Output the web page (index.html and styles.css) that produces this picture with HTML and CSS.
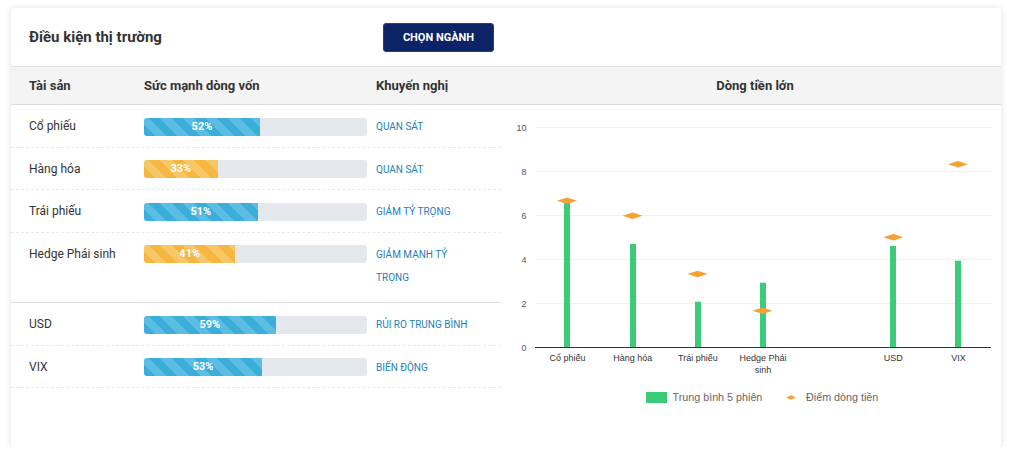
FILE: index.html
```html
<!DOCTYPE html>
<html lang="vi">
<head>
<meta charset="utf-8">
<title>Điều kiện thị trường</title>
<link rel="stylesheet" href="styles.css">
</head>
<body>
<div class="card">
  <div class="card-head">
    <h2 class="title">Điều kiện thị trường</h2>
    <button class="btn" type="button">CHỌN NGÀNH</button>
  </div>
  <div class="card-body">
    <section class="assets">
      <div class="row head">
        <div>Tài sản</div>
        <div>Sức mạnh dòng vốn</div>
        <div class="rec-h">Khuyến nghị</div>
      </div>
      <div class="row">
        <div class="name">Cổ phiếu</div>
        <div class="bar"><div class="fill blue" style="width:52%">52%</div></div>
        <div class="rec">QUAN SÁT</div>
      </div>
      <div class="row">
        <div class="name">Hàng hóa</div>
        <div class="bar"><div class="fill orange" style="width:33%">33%</div></div>
        <div class="rec">QUAN SÁT</div>
      </div>
      <div class="row">
        <div class="name">Trái phiếu</div>
        <div class="bar"><div class="fill blue" style="width:51%">51%</div></div>
        <div class="rec">GIẢM TỶ TRỌNG</div>
      </div>
      <div class="row group-end">
        <div class="name">Hedge Phái sinh</div>
        <div class="bar"><div class="fill orange" style="width:41%">41%</div></div>
        <div class="rec">GIẢM MẠNH TỶ TRỌNG</div>
      </div>
      <div class="row">
        <div class="name">USD</div>
        <div class="bar"><div class="fill blue" style="width:59%">59%</div></div>
        <div class="rec">RỦI RO TRUNG BÌNH</div>
      </div>
      <div class="row">
        <div class="name">VIX</div>
        <div class="bar"><div class="fill blue" style="width:53%">53%</div></div>
        <div class="rec">BIẾN ĐỘNG</div>
      </div>
    </section>
    <section class="flow">
      <div class="flow-head">Dòng tiền lớn</div>
      <svg class="chart" width="500" height="342" viewBox="0 0 500 342">
        <g class="grid">
          <line x1="34" y1="22.5" x2="490" y2="22.5"/>
          <line x1="34" y1="66.5" x2="490" y2="66.5"/>
          <line x1="34" y1="110.5" x2="490" y2="110.5"/>
          <line x1="34" y1="154.5" x2="490" y2="154.5"/>
          <line x1="34" y1="198.5" x2="490" y2="198.5"/>
        </g>
        <g class="ylab">
          <text x="25.5" y="26">10</text>
          <text x="25.5" y="70">8</text>
          <text x="25.5" y="114">6</text>
          <text x="25.5" y="158">4</text>
          <text x="25.5" y="202">2</text>
          <text x="25.5" y="246">0</text>
        </g>
        <g class="bars">
          <rect x="63" y="96.7" width="6" height="145.3"/>
          <rect x="129" y="139" width="6" height="103"/>
          <rect x="194" y="196.7" width="6" height="45.3"/>
          <rect x="259" y="177.7" width="6" height="64.3"/>
          <rect x="389" y="141" width="6" height="101"/>
          <rect x="454" y="155.7" width="6" height="86.3"/>
        </g>
        <line class="axis" x1="34" y1="242.5" x2="490" y2="242.5"/>
        <g class="marks">
          <polygon points="56,95.7 66,92.5 76,95.7 66,98.9"/>
          <polygon points="121.5,110.7 131.5,107.5 141.5,110.7 131.5,113.9"/>
          <polygon points="186.5,169 196.5,165.8 206.5,169 196.5,172.2"/>
          <polygon points="251.5,205.7 261.5,202.5 271.5,205.7 261.5,208.9"/>
          <polygon points="382.3,132.3 392.3,129.1 402.3,132.3 392.3,135.5"/>
          <polygon points="447,59.3 457,56.1 467,59.3 457,62.5"/>
        </g>
        <g class="xlab">
          <text x="66.5" y="255.5">Cổ phiếu</text>
          <text x="131.7" y="255.5">Hàng hóa</text>
          <text x="196.9" y="255.5">Trái phiếu</text>
          <text x="262" y="255.5">Hedge Phái<tspan x="262" y="267.5">sinh</tspan></text>
          <text x="392.3" y="255.5">USD</text>
          <text x="457.4" y="255.5">VIX</text>
        </g>
        <g class="legend">
          <rect class="lg-bar" x="145" y="287" width="21" height="11"/>
          <text x="171.5" y="296">Trung bình 5 phiên</text>
          <polygon class="lg-mark" points="285,292.5 290,290.3 295,292.5 290,294.7"/>
          <text x="305" y="296">Điểm dòng tiền</text>
        </g>
      </svg>
    </section>
  </div>
</div>
</body>
</html>
```
FILE: styles.css
```css
html, body {
  margin: 0;
  background: #fff;
}

body {
  font-family: Roboto, "Liberation Sans", Arial, sans-serif;
  color: #333;
}

.card {
  margin: 8px 0 0 11px;
  width: 990px;
  height: 439px;
  background: #fff;
  border-radius: 4px;
  box-shadow: 0 0 7px rgba(0, 0, 0, 0.12);
  overflow: hidden;
  display: flex;
  flex-direction: column;
}

.card-head {
  flex: none;
  height: 59px;
  box-sizing: border-box;
  display: flex;
  align-items: center;
  padding-left: 18px;
  border-bottom: 1px solid #e2e2e2;
}

.title {
  margin: 0;
  width: 354px;
  font-size: 15px;
  font-weight: 700;
  color: #333;
}

.btn {
  width: 111px;
  height: 29px;
  padding: 0;
  background: #0c2466;
  color: #fff;
  border: 1px solid #223f85;
  border-radius: 3px;
  font-family: Roboto, "Liberation Sans", Arial, sans-serif;
  font-size: 11px;
  font-weight: 700;
}

.card-body {
  flex: 1;
  display: grid;
  grid-template-columns: 490px 500px;
}

.row {
  display: grid;
  grid-template-columns: 115px 223px 110px;
  padding: 10px 18px 8.5px;
  line-height: 23px;
  border-bottom: 1px dashed #e6e8ea;
}

.row.head {
  height: 38px;
  box-sizing: border-box;
  padding: 0 18px;
  align-items: center;
  line-height: normal;
  background: #f4f4f4;
  border-bottom: 1px solid #dcdcdc;
  font-size: 13px;
  font-weight: 700;
}

.row.head .rec-h {
  padding-left: 9px;
}

.row.group-end {
  padding-bottom: 13.5px;
  border-bottom: 1px solid #dcdcdc;
}

.name {
  font-size: 12px;
  color: #333;
}

.bar {
  height: 18px;
  margin-top: 2.5px;
  background: #e4e8ec;
  border-radius: 3px;
  overflow: hidden;
  display: flex;
}

.fill {
  height: 100%;
  color: #fff;
  font-size: 11px;
  font-weight: 700;
  line-height: 18px;
  text-align: center;
}

.fill.blue {
  background: repeating-linear-gradient(45deg, #3aadd8 0 8px, #5bbde1 8px 16px);
}

.fill.orange {
  background: repeating-linear-gradient(45deg, #f5b73f 0 8px, #f7c666 8px 16px);
}

.rec {
  padding-left: 9px;
  font-size: 10px;
  color: #1d80b6;
}

.flow-head {
  height: 38px;
  box-sizing: border-box;
  background: #f4f4f4;
  border-bottom: 1px solid #dcdcdc;
  display: flex;
  align-items: center;
  justify-content: center;
  padding-left: 8px;
  font-size: 13px;
  font-weight: 700;
}

.chart {
  display: block;
}

.chart text {
  font-family: "Liberation Sans", Arial, sans-serif;
}

.grid line {
  stroke: #eef0f3;
  stroke-width: 1;
}

.axis {
  stroke: #333;
  stroke-width: 1;
}

.ylab text {
  font-size: 9px;
  fill: #555;
  text-anchor: end;
}

.xlab text {
  font-size: 9px;
  fill: #333;
  text-anchor: middle;
}

.bars rect {
  fill: #3ccb78;
}

.marks polygon,
.lg-mark {
  fill: #f7a033;
}

.lg-bar {
  fill: #3ccb78;
}

.legend text {
  font-size: 10.75px;
  fill: #666;
}
```
